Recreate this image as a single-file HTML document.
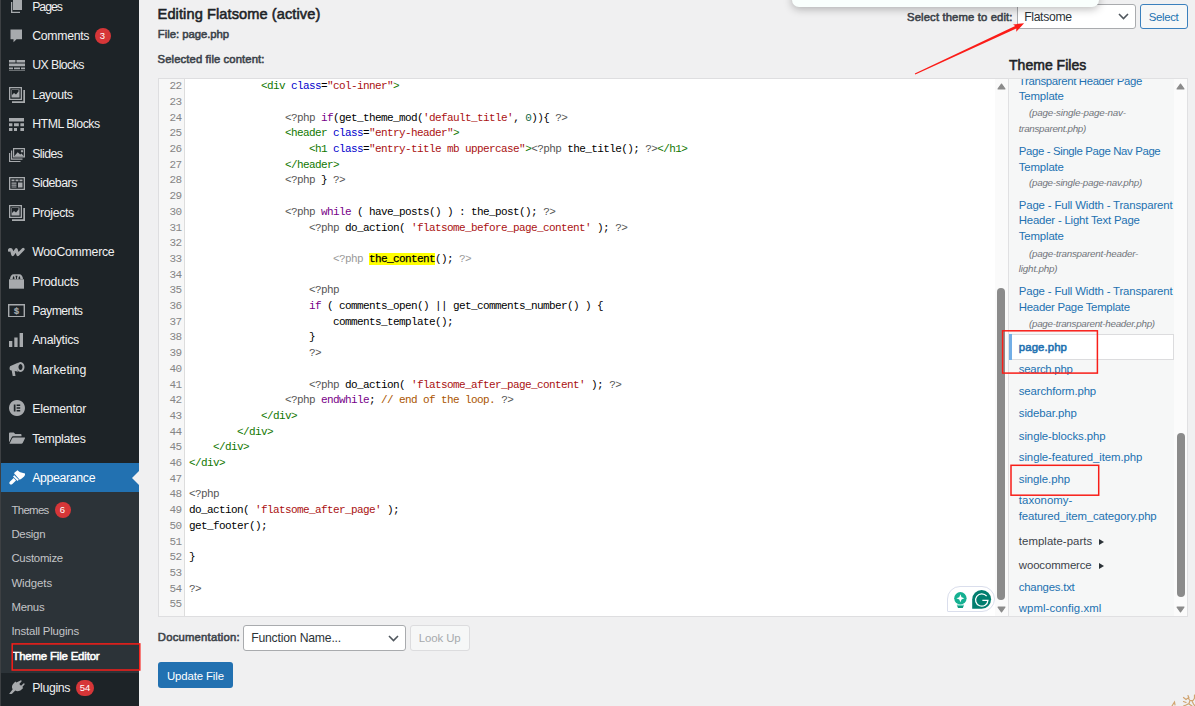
<!DOCTYPE html>
<html lang="en"><head><meta charset="utf-8"><title>Edit Themes</title>
<style>
*{box-sizing:border-box}
html,body{margin:0;padding:0}
body{width:1195px;height:706px;overflow:hidden;background:#f0f0f1;position:relative;font-family:"Liberation Sans",sans-serif;color:#3c434a}
.abs,.ic,.ln,.cl,.tx{position:absolute;white-space:nowrap}
.tx{line-height:20px;height:20px}
#side{position:absolute;left:0;top:0;width:139px;height:706px;background:#1d2327}
#edge{position:absolute;left:0;top:0;width:1px;height:706px;background:#3d4043}
#cur{position:absolute;left:1px;top:463px;width:138px;height:29px;background:#2271b1}
#curarrow{position:absolute;left:132px;top:471px;width:0;height:0;border:7px solid transparent;border-right-color:#f0f0f1;border-left-width:0}
#sub{position:absolute;left:1px;top:492px;width:138px;height:181px;background:#2c3338}
.mi{font-size:12.3px;line-height:20px;color:#f0f0f1;letter-spacing:0}
.si{left:11.5px;font-size:11.4px;line-height:20px;color:#c3c4c7}
.badge{position:absolute;background:#d63638;color:#fff;border-radius:8px;height:16px;min-width:16px;font-size:9.5px;line-height:16px;text-align:center;font-weight:400}
h2{position:absolute;margin:0;left:158px;top:4px;font-size:14.6px;line-height:20px;font-weight:700;color:#1d2327;white-space:nowrap}
.lbl{font-size:11.3px;line-height:20px;font-weight:700;color:#3c434a}
#ed{position:absolute;left:158px;top:78px;width:850px;height:539px;background:#fff;border:1px solid #dedee0;border-right:0}
#gut{position:absolute;left:159px;top:79px;width:26px;height:537px;background:#f7f7f7;border-right:1px solid #ddd}
.ln{left:159px;width:22.5px;text-align:right;font-family:"Liberation Mono",monospace;font-size:11px;letter-spacing:-.6px;line-height:15.7px;height:15.7px;color:#858585}
.cl{left:189px;margin:0;white-space:pre;font-family:"Liberation Mono",monospace;font-size:11px;letter-spacing:-.6px;line-height:15.7px;height:15.7px;color:#000}
.t{color:#117700}.a{color:#0000cc}.s{color:#aa1111}.k{color:#770088}.m{color:#555}.c{color:#aa5500}.n{color:#116644}
.h{background:#ffff00;-webkit-text-stroke:.25px #000}
.f{color:#999}
#sb1{position:absolute;left:995px;top:79px;width:13px;height:537px;background:#fafafa}
#fbox{position:absolute;left:1008px;top:78px;width:180px;height:539px;background:#f6f7f7;border:1px solid #e0e0e2}
#sb2{position:absolute;left:1174px;top:79px;width:13px;height:537px;background:#fbfbfb}
.thumb{position:absolute;width:7.6px;border-radius:4px;background:#8b8b8b}
.fl{font-size:11.4px;line-height:20px;color:#2271b1}
.fb{font-weight:700}
.fi{font-size:9.8px;line-height:20px;font-style:italic;color:#50575e}
.ff{font-size:11.4px;line-height:20px;color:#3c434a}
.tri{display:inline-block;width:0;height:0;border:3.5px solid transparent;border-right-width:0;border-left:5.5px solid #2c3338;margin-left:7px;vertical-align:0}
#cursel{position:absolute;left:1009px;top:334px;width:165px;height:26px;background:#fff;border:1px solid #dcdcde;border-left:0}
#curbar{position:absolute;left:1008.7px;top:334px;width:3.3px;height:26px;background:#72aee6}
.sel{position:absolute;background:#fff;border:1px solid #a9abae;border-radius:3px;font-size:12.2px;color:#2c3338;white-space:nowrap}
.btn{position:absolute;border-radius:3px;font-size:11.4px;text-align:center;white-space:nowrap}
.red{position:absolute;border:1.5px solid #f5222d}
</style></head><body>

<div id="side"></div><div id="edge"></div>
<div id="cur"></div><div id="curarrow"></div><div id="sub"></div>
<svg class="ic" style="left:9.5px;top:-2px" width="13" height="15" viewBox="0 0 13 15" fill="#a7aaad"><path d="M3 1h9v11H3z M1 4h1.3v9.7H10V15H1z" /></svg>
<div class="tx" style="left:32.2px;top:-3px;font-size:12.3px;color:#f0f0f1;letter-spacing:-1.044px;">Pages</div>
<svg class="ic" style="left:10px;top:28.5px" width="13" height="14" viewBox="0 0 13 14" fill="#a7aaad"><path d="M.5 .4h11.5v9.8H6.5L3.5 13.2V10.2H.5z"/></svg>
<div class="tx" style="left:32.2px;top:26px;font-size:12.3px;color:#f0f0f1;letter-spacing:-0.308px;">Comments</div>
<svg class="ic" style="left:8.5px;top:59px" width="16" height="12" viewBox="0 0 16 12" fill="#a7aaad"><path d="M0 1h6.5v2.4H0z M7.5 1H16v2.4H7.5z M0 4.6h16v2.6H0z M0 8.4h4v1.8H0z M5 8.4h6v1.8H5z M12 8.4h4v1.8h-4z"/><path d="M0 11.2h16v.8H0z" opacity=".7"/></svg>
<div class="tx" style="left:32.2px;top:55px;font-size:12.3px;color:#f0f0f1;letter-spacing:-0.565px;">UX Blocks</div>
<svg class="ic" style="left:8.5px;top:87px" width="16" height="16" viewBox="0 0 16 16" fill="#a7aaad"><path d="M0 0h13v13H0z M1.3 1.3v10.4h10.4V1.3z" fill-rule="evenodd"/><path d="M2.5 2.5h8v8h-8z M3 3v5l2-2 2 1.5 2.5-3V3z" fill-rule="evenodd"/><path d="M14.3 3H16v13H3v-1.7h11.3z"/></svg>
<div class="tx" style="left:32.2px;top:85px;font-size:12.3px;color:#f0f0f1;letter-spacing:-0.38px;">Layouts</div>
<svg class="ic" style="left:9px;top:117.8px" width="15" height="13.4" viewBox="0 0 15 13.4" fill="#a7aaad"><path d="M0 0h15v3.5H0z M0 5.2h3.4v3H0z M5 5.2h4.8v3H5z M11.4 5.2H15v3h-3.6z M0 10h3.4v3.4H0z M5 10h3v3.4H5z M11.4 10H15v3.4h-3.6z"/></svg>
<div class="tx" style="left:32.2px;top:114px;font-size:12.3px;color:#f0f0f1;letter-spacing:-0.466px;">HTML Blocks</div>
<svg class="ic" style="left:8.5px;top:147.5px" width="16" height="14.2" viewBox="0 0 16 14.2" fill="#a7aaad"><path d="M4 0h12v9.5H4z M5.2 1.2v7.1h9.6V1.2z" fill-rule="evenodd"/><path d="M5.2 8.3l3.5-4 2.5 2.2 1.3-1 2.3 2.8z M13 2a1.2 1.2 0 1 0 .01 0z"/><path d="M2 2.5h1.2v8h10.3v1.2H2z M0 5h1.2v8h10.3v1.2H0z"/></svg>
<div class="tx" style="left:32.2px;top:144px;font-size:12.3px;color:#f0f0f1;letter-spacing:-0.56px;">Slides</div>
<svg class="ic" style="left:9px;top:176.5px" width="16" height="13" viewBox="0 0 16 13" fill="#a7aaad"><path d="M0 0h16v13H0z M1.3 1.3v10.4h13.4V1.3z" fill-rule="evenodd"/><path d="M2.5 2.6h3v1.6h-3z M6.5 2.6h3v1.6h-3z M10.5 2.6h3v1.6h-3z M2.5 5.4h5v1.4h-5z M2.5 7.6h5v1.2h-5z M2.5 9.6h5v1h-5z M9 5.6h4.5v5H9z"/></svg>
<div class="tx" style="left:32.2px;top:173px;font-size:12.3px;color:#f0f0f1;letter-spacing:-0.492px;">Sidebars</div>
<svg class="ic" style="left:8.5px;top:204.5px" width="16" height="16" viewBox="0 0 16 16" fill="#a7aaad"><path d="M0 0h13v13H0z M1.3 1.3v10.4h10.4V1.3z" fill-rule="evenodd"/><path d="M2.5 2.5h8v8h-8z M3 3v5l2-2 2 1.5 2.5-3V3z" fill-rule="evenodd"/><path d="M14.3 3H16v13H3v-1.7h11.3z"/></svg>
<div class="tx" style="left:32.2px;top:203px;font-size:12.3px;color:#f0f0f1;letter-spacing:-0.346px;">Projects</div>
<svg class="ic" style="left:8px;top:245px" width="17" height="12.5" viewBox="0 0 17 12.5" fill="#a7aaad"><path d="M1.2 5.3C1.7 4.1 3.2 4.1 3.5 5.3L4.7 9.7 8.3 4.6 9.8 9.7 15.2 4.3" fill="none" stroke="#a7aaad" stroke-width="2.9" stroke-linejoin="round" stroke-linecap="round"/></svg>
<div class="tx" style="left:32.2px;top:242px;font-size:12.3px;color:#f0f0f1;letter-spacing:-0.27px;">WooCommerce</div>
<svg class="ic" style="left:9px;top:274.3px" width="15" height="14.5" viewBox="0 0 15 14.5" fill="#a7aaad"><path d="M0 5.3h15V14.7H0z"/><path d="M1 5.3C1 2.3 2.6.300 4.8.300h5.4c2.2 0 3.8 2 3.8 5h-2.7c0-1.7-.4-2.9-1.1-3.3-.5.8-.7 1.9-.7 3.3H7.9c0-1.5.2-2.7.7-3.6H6.4c.5.9.7 2.1.7 3.6H5.5c0-1.4-.2-2.5-.7-3.3-.7.4-1.1 1.6-1.1 3.3z"/></svg>
<div class="tx" style="left:32.2px;top:272px;font-size:12.3px;color:#f0f0f1;letter-spacing:-0.247px;">Products</div>
<svg class="ic" style="left:8px;top:304px" width="17" height="13.4" viewBox="0 0 17 13.4" fill="#a7aaad"><path d="M0 0h17v13.4H0z M1.4 1.4v10.6h14.2V1.4z" fill-rule="evenodd"/><text x="8.5" y="10" font-size="9" font-weight="700" stroke="#a7aaad" stroke-width=".2" text-anchor="middle" font-family="Liberation Sans, sans-serif">$</text></svg>
<div class="tx" style="left:32.2px;top:301px;font-size:12.3px;color:#f0f0f1;letter-spacing:-0.57px;">Payments</div>
<svg class="ic" style="left:9px;top:332.5px" width="14" height="14.5" viewBox="0 0 14 14.5" fill="#a7aaad"><path d="M0 8h3.3v6.5H0z M5.3 4.5h3.3v10H5.3z M10.6 0h3.4v14.5h-3.4z"/></svg>
<div class="tx" style="left:32.2px;top:330px;font-size:12.3px;color:#f0f0f1;letter-spacing:-0.277px;">Analytics</div>
<svg class="ic" style="left:9px;top:362px" width="15.5" height="14" viewBox="0 0 15.5 14" fill="#a7aaad"><path d="M11.5 0a4 5 0 1 1-.01 0z M11.5 2a2 3 0 1 0 .01 0z" fill-rule="evenodd"/><path d="M9.5.400L1.5 4C.300 4.6.300 8 1.5 8.3l1.2.2 1 5.5h2.8L5.7 9l3.8.8C7.6 7.8 7.6 2.8 9.5.400z"/></svg>
<div class="tx" style="left:32.2px;top:360px;font-size:12.3px;color:#f0f0f1;letter-spacing:0.012px;">Marketing</div>
<svg class="ic" style="left:8.5px;top:400px" width="16" height="16" viewBox="0 0 16 16" fill="#a7aaad"><path d="M8 0a8 8 0 1 1-.01 0z M4.8 4.6v6.8h1.7V4.6z M7.6 4.6v1.5h3.6V4.6z M7.6 7.25v1.5h3.6v-1.5z M7.6 9.9v1.5h3.6V9.9z" fill-rule="evenodd"/></svg>
<div class="tx" style="left:32.2px;top:399px;font-size:12.3px;color:#f0f0f1;letter-spacing:-0.243px;">Elementor</div>
<svg class="ic" style="left:9px;top:431.5px" width="16" height="12" viewBox="0 0 16 12" fill="#a7aaad"><path d="M0 1.5C0 .800.6.500 1.2.500h3.5l1.5 1.5h5.3c.6 0 1 .4 1 1v1.3H4.2c-.8 0-1.3.4-1.6 1.1L0 10.5z"/><path d="M4.5 5.5h11c.5 0 .7.4.5.8l-2.3 4.7c-.3.6-.8.8-1.4.8H.500l2.7-5.5c.3-.500.7-.800 1.3-.800z"/></svg>
<div class="tx" style="left:32.2px;top:429px;font-size:12.3px;color:#f0f0f1;letter-spacing:-0.306px;">Templates</div>
<svg class="ic" style="left:8.5px;top:470px" width="16.5" height="14.5" viewBox="0 0 16.5 14.5" fill="#fff"><g transform="translate(-8.5,-470)"><path d="M9.3 484.1c-.7-.7-.6-1.7.2-2.5l3.7-3.5 2.3 2.3-3.6 3.6c-.8.8-1.9.800-2.6.100z"/><path d="M12.5 476.5l1.3-1.2 4.5 4.5-1.3 1.2z"/><path d="M14.6 474.6c-1-.6-1.2-1.5-.5-2.1l2.9-2.3c1.2 1.3 2.4 2 3.8 2.4 1.3.4 2.7.7 4.3.9-.5 1.6-1.4 3-2.6 4.1-1 .9-2.1 1.7-3.3 2.1z"/></g></svg>
<div class="tx" style="left:32.2px;top:468px;font-size:12.3px;color:#fff;letter-spacing:-0.336px;">Appearance</div>
<svg class="ic" style="left:9px;top:680px" width="16" height="14" viewBox="0 0 16 14" fill="#a7aaad"><path d="M11.5.500c.6-.5 1.5.300 1 1L10.3 4l1.7 1.7 2.5-2.2c.7-.5 1.5.4 1 1l-2.2 2.5.9.9-1.4 1.4C10.5 11.6 8 11.7 6.3 10.5L3.5 13.3c-1.2 1.2-2.7 1-3.3.5l3.5-4.6C2.5 7.4 2.7 5.3 5 3L6.4 1.6l.9.9z"/></svg>
<div class="tx" style="left:32.2px;top:678px;font-size:12.3px;color:#f0f0f1;letter-spacing:-0.341px;">Plugins</div>
<div class="badge" style="left:94.5px;top:28px">3</div>
<div class="badge" style="left:54.5px;top:501.5px">6</div>
<div class="badge" style="left:76px;top:680.2px;min-width:18px;height:16px;line-height:16px">54</div>
<div class="tx" style="left:11.4px;top:500px;font-size:11.4px;color:#c3c4c7;letter-spacing:-0.651px;">Themes</div>
<div class="tx" style="left:11.4px;top:524px;font-size:11.4px;color:#c3c4c7;letter-spacing:-0.274px;">Design</div>
<div class="tx" style="left:11.4px;top:548px;font-size:11.4px;color:#c3c4c7;letter-spacing:-0.252px;">Customize</div>
<div class="tx" style="left:11.4px;top:573px;font-size:11.4px;color:#c3c4c7;letter-spacing:-0.076px;">Widgets</div>
<div class="tx" style="left:11.4px;top:597px;font-size:11.4px;color:#c3c4c7;letter-spacing:-0.251px;">Menus</div>
<div class="tx" style="left:11.4px;top:621px;font-size:11.4px;color:#c3c4c7;letter-spacing:-0.184px;">Install Plugins</div>
<div class="tx" style="left:12.4px;top:646px;font-size:11.4px;color:#fff;letter-spacing:-0.168px;-webkit-text-stroke:.55px #fff;">Theme File Editor</div>


<div class="tx" style="left:157.6px;top:4px;font-size:14.6px;color:#1d2327;letter-spacing:0.088px;-webkit-text-stroke:.55px #1d2327;">Editing Flatsome (active)</div>
<div class="tx" style="left:157.8px;top:24px;font-size:11.3px;color:#3c434a;letter-spacing:-0.024px;-webkit-text-stroke:.55px #3c434a;">File: page.php</div>
<div class="tx" style="left:157.6px;top:49px;font-size:11.3px;color:#3c434a;letter-spacing:0.096px;-webkit-text-stroke:.55px #3c434a;">Selected file content:</div>

<div id="ed"></div><div id="gut"></div>
<div class="ln" style="top:79.2px">22</div><pre class="cl" style="top:79.2px">            <span class="t">&lt;div</span> <span class="a">class</span>=<span class="s">"col-inner"</span><span class="t">&gt;</span></pre>
<div class="ln" style="top:94.9px">23</div><pre class="cl" style="top:94.9px"></pre>
<div class="ln" style="top:110.6px">24</div><pre class="cl" style="top:110.6px">                <span class="m">&lt;?php</span> <span class="k">if</span>(get_theme_mod(<span class="s">'default_title'</span>, <span class="n">0</span>)){ <span class="m">?&gt;</span></pre>
<div class="ln" style="top:126.3px">25</div><pre class="cl" style="top:126.3px">                <span class="t">&lt;header</span> <span class="a">class</span>=<span class="s">"entry-header"</span><span class="t">&gt;</span></pre>
<div class="ln" style="top:142px">26</div><pre class="cl" style="top:142px">                    <span class="t">&lt;h1</span> <span class="a">class</span>=<span class="s">"entry-title mb uppercase"</span><span class="t">&gt;</span><span class="m">&lt;?php</span> the_title(); <span class="m">?&gt;</span><span class="t">&lt;/h1&gt;</span></pre>
<div class="ln" style="top:157.7px">27</div><pre class="cl" style="top:157.7px">                <span class="t">&lt;/header&gt;</span></pre>
<div class="ln" style="top:173.4px">28</div><pre class="cl" style="top:173.4px">                <span class="m">&lt;?php</span> } <span class="m">?&gt;</span></pre>
<div class="ln" style="top:189.1px">29</div><pre class="cl" style="top:189.1px"></pre>
<div class="ln" style="top:204.8px">30</div><pre class="cl" style="top:204.8px">                <span class="m">&lt;?php</span> <span class="k">while</span> ( have_posts() ) : the_post(); <span class="m">?&gt;</span></pre>
<div class="ln" style="top:220.5px">31</div><pre class="cl" style="top:220.5px">                    <span class="m">&lt;?php</span> do_action( <span class="s">'flatsome_before_page_content'</span> ); <span class="m">?&gt;</span></pre>
<div class="ln" style="top:236.2px">32</div><pre class="cl" style="top:236.2px"></pre>
<div class="ln" style="top:251.9px">33</div><pre class="cl" style="top:251.9px">                        <span class="m f">&lt;?php</span> <span class="h">the_content</span>(); <span class="m f">?&gt;</span></pre>
<div class="ln" style="top:267.6px">34</div><pre class="cl" style="top:267.6px"></pre>
<div class="ln" style="top:283.3px">35</div><pre class="cl" style="top:283.3px">                    <span class="m">&lt;?php</span></pre>
<div class="ln" style="top:299px">36</div><pre class="cl" style="top:299px">                    <span class="k">if</span> ( comments_open() || get_comments_number() ) {</pre>
<div class="ln" style="top:314.7px">37</div><pre class="cl" style="top:314.7px">                        comments_template();</pre>
<div class="ln" style="top:330.4px">38</div><pre class="cl" style="top:330.4px">                    }</pre>
<div class="ln" style="top:346.1px">39</div><pre class="cl" style="top:346.1px">                    <span class="m">?&gt;</span></pre>
<div class="ln" style="top:361.8px">40</div><pre class="cl" style="top:361.8px"></pre>
<div class="ln" style="top:377.5px">41</div><pre class="cl" style="top:377.5px">                    <span class="m">&lt;?php</span> do_action( <span class="s">'flatsome_after_page_content'</span> ); <span class="m">?&gt;</span></pre>
<div class="ln" style="top:393.2px">42</div><pre class="cl" style="top:393.2px">                <span class="m">&lt;?php</span> <span class="k">endwhile</span>; <span class="c">// end of the loop. </span><span class="m">?&gt;</span></pre>
<div class="ln" style="top:408.9px">43</div><pre class="cl" style="top:408.9px">            <span class="t">&lt;/div&gt;</span></pre>
<div class="ln" style="top:424.6px">44</div><pre class="cl" style="top:424.6px">        <span class="t">&lt;/div&gt;</span></pre>
<div class="ln" style="top:440.3px">45</div><pre class="cl" style="top:440.3px">    <span class="t">&lt;/div&gt;</span></pre>
<div class="ln" style="top:456px">46</div><pre class="cl" style="top:456px"><span class="t">&lt;/div&gt;</span></pre>
<div class="ln" style="top:471.7px">47</div><pre class="cl" style="top:471.7px"></pre>
<div class="ln" style="top:487.4px">48</div><pre class="cl" style="top:487.4px"><span class="m">&lt;?php</span></pre>
<div class="ln" style="top:503.1px">49</div><pre class="cl" style="top:503.1px">do_action( <span class="s">'flatsome_after_page'</span> );</pre>
<div class="ln" style="top:518.8px">50</div><pre class="cl" style="top:518.8px">get_footer();</pre>
<div class="ln" style="top:534.5px">51</div><pre class="cl" style="top:534.5px"></pre>
<div class="ln" style="top:550.2px">52</div><pre class="cl" style="top:550.2px">}</pre>
<div class="ln" style="top:565.9px">53</div><pre class="cl" style="top:565.9px"></pre>
<div class="ln" style="top:581.6px">54</div><pre class="cl" style="top:581.6px"><span class="m">?&gt;</span></pre>
<div class="ln" style="top:597.3px">55</div><pre class="cl" style="top:597.3px"></pre>
<div id="sb1"></div>
<svg class="abs" style="left:996.6px;top:82.5px" width="9" height="7" viewBox="0 0 9 7"><path d="M4.5 1.1L7.9 5.9H1.1z" fill="#8b8b8b" stroke="#8b8b8b" stroke-width="1.2" stroke-linejoin="round"/></svg>
<svg class="abs" style="left:996.6px;top:605.6px" width="9" height="7" viewBox="0 0 9 7"><path d="M4.5 5.9L7.9 1.1H1.1z" fill="#8b8b8b" stroke="#8b8b8b" stroke-width="1.2" stroke-linejoin="round"/></svg>
<div class="thumb" style="left:997.3px;top:288px;height:312px"></div>

<div id="fbox"></div><div id="cursel"></div><div id="curbar"></div>
<div class="abs" style="left:1009px;top:79px;width:165px;height:536px;overflow:hidden"><div class="abs" style="left:-1009px;top:-79px;width:1195px;height:706px">
<div class="tx" style="left:1018.8px;top:71px;font-size:11.4px;color:#2271b1;letter-spacing:-0.349px;">Transparent Header Page</div>
<div class="tx" style="left:1018.8px;top:86px;font-size:11.4px;color:#2271b1;letter-spacing:-0.16px;">Template</div>
<div class="tx" style="left:1029px;top:103px;font-size:9.8px;color:#70747a;letter-spacing:-0.205px;font-style:italic;">(page-single-page-nav-</div>
<div class="tx" style="left:1018.8px;top:119px;font-size:9.8px;color:#70747a;letter-spacing:-0.293px;font-style:italic;">transparent.php)</div>
<div class="tx" style="left:1018.8px;top:141px;font-size:11.4px;color:#2271b1;letter-spacing:-0.363px;">Page - Single Page Nav Page</div>
<div class="tx" style="left:1018.8px;top:157px;font-size:11.4px;color:#2271b1;letter-spacing:-0.16px;">Template</div>
<div class="tx" style="left:1029px;top:173px;font-size:9.8px;color:#70747a;letter-spacing:-0.258px;font-style:italic;">(page-single-page-nav.php)</div>
<div class="tx" style="left:1018.8px;top:195px;font-size:11.4px;color:#2271b1;letter-spacing:-0.149px;">Page - Full Width - Transparent</div>
<div class="tx" style="left:1018.8px;top:210px;font-size:11.4px;color:#2271b1;letter-spacing:-0.204px;">Header - Light Text Page</div>
<div class="tx" style="left:1018.8px;top:226px;font-size:11.4px;color:#2271b1;letter-spacing:-0.16px;">Template</div>
<div class="tx" style="left:1029px;top:244px;font-size:9.8px;color:#70747a;letter-spacing:-0.226px;font-style:italic;">(page-transparent-header-</div>
<div class="tx" style="left:1018.8px;top:259px;font-size:9.8px;color:#70747a;letter-spacing:-0.168px;font-style:italic;">light.php)</div>
<div class="tx" style="left:1018.8px;top:281px;font-size:11.4px;color:#2271b1;letter-spacing:-0.149px;">Page - Full Width - Transparent</div>
<div class="tx" style="left:1018.8px;top:297px;font-size:11.4px;color:#2271b1;letter-spacing:-0.269px;">Header Page Template</div>
<div class="tx" style="left:1029px;top:314px;font-size:9.8px;color:#70747a;letter-spacing:-0.269px;font-style:italic;">(page-transparent-header.php)</div>
<div class="tx" style="left:1018.8px;top:337px;font-size:11.4px;color:#2271b1;letter-spacing:0.083px;-webkit-text-stroke:.55px #2271b1;">page.php</div>
<div class="tx" style="left:1018.8px;top:359px;font-size:11.4px;color:#2271b1;letter-spacing:-0.262px;">search.php</div>
<div class="tx" style="left:1018.8px;top:381px;font-size:11.4px;color:#2271b1;letter-spacing:-0.134px;">searchform.php</div>
<div class="tx" style="left:1018.8px;top:403px;font-size:11.4px;color:#2271b1;letter-spacing:-0.091px;">sidebar.php</div>
<div class="tx" style="left:1018.8px;top:426px;font-size:11.4px;color:#2271b1;letter-spacing:-0.076px;">single-blocks.php</div>
<div class="tx" style="left:1018.8px;top:447px;font-size:11.4px;color:#2271b1;letter-spacing:-0.077px;">single-featured_item.php</div>
<div class="tx" style="left:1018.8px;top:469px;font-size:11.4px;color:#2271b1;letter-spacing:-0.082px;">single.php</div>
<div class="tx" style="left:1018.8px;top:490px;font-size:11.4px;color:#2271b1;letter-spacing:0.052px;">taxonomy-</div>
<div class="tx" style="left:1018.8px;top:506px;font-size:11.4px;color:#2271b1;letter-spacing:-0.124px;">featured_item_category.php</div>
<div class="tx" style="left:1018.8px;top:531px;font-size:11.4px;color:#3c434a;letter-spacing:0.045px;">template-parts<span class="tri"></span></div>
<div class="tx" style="left:1018.8px;top:555px;font-size:11.4px;color:#3c434a;letter-spacing:-0.116px;">woocommerce<span class="tri"></span></div>
<div class="tx" style="left:1018.8px;top:577px;font-size:11.4px;color:#2271b1;letter-spacing:-0.227px;">changes.txt</div>
<div class="tx" style="left:1018.8px;top:598px;font-size:11.4px;color:#2271b1;letter-spacing:0.06px;">wpml-config.xml</div>
</div></div>
<div id="sb2"></div>
<svg class="abs" style="left:1176.4px;top:82.5px" width="9" height="7" viewBox="0 0 9 7"><path d="M4.5 1.1L7.9 5.9H1.1z" fill="#8b8b8b" stroke="#8b8b8b" stroke-width="1.2" stroke-linejoin="round"/></svg>
<svg class="abs" style="left:1176.4px;top:605.6px" width="9" height="7" viewBox="0 0 9 7"><path d="M4.5 5.9L7.9 1.1H1.1z" fill="#8b8b8b" stroke="#8b8b8b" stroke-width="1.2" stroke-linejoin="round"/></svg>
<div class="thumb" style="left:1177.3px;top:433px;height:164px"></div>

<div class="tx" style="left:1009px;top:55px;font-size:14px;color:#1d2327;letter-spacing:0.027px;-webkit-text-stroke:.55px #1d2327;">Theme Files</div>

<div class="tx" style="left:907px;top:7px;font-size:11.3px;color:#3c434a;letter-spacing:0.125px;-webkit-text-stroke:.55px #3c434a;">Select theme to edit:</div>
<div class="sel" style="left:1016.5px;top:3.5px;width:119px;height:25.5px;"></div><div class="tx" style="left:1024.2px;top:7px;font-size:12.2px;color:#2c3338;letter-spacing:-0.332px;">Flatsome</div>
<svg class="abs" style="left:1117.5px;top:13.2px" width="11" height="7" viewBox="0 0 11 7" fill="none" stroke="#50575e" stroke-width="1.6"><path d="M1 1l4.5 4.5L10 1"/></svg>
<div class="btn" style="left:1140px;top:3.5px;width:47.6px;height:25.5px;background:#f6f7f7;border:1px solid #3b80bd"></div><div class="tx" style="left:1148.8px;top:7px;font-size:11.4px;color:#2271b1;letter-spacing:-0.354px;">Select</div>

<div class="tx" style="left:157.8px;top:627px;font-size:11.3px;color:#3c434a;letter-spacing:0.206px;-webkit-text-stroke:.55px #3c434a;">Documentation:</div>
<div class="sel" style="left:243.3px;top:625px;width:162.3px;height:26px;"></div><div class="tx" style="left:251.2px;top:628px;font-size:12.2px;color:#2c3338;letter-spacing:-0.188px;">Function Name...</div>
<svg class="abs" style="left:388px;top:635.3px" width="11" height="7" viewBox="0 0 11 7" fill="none" stroke="#50575e" stroke-width="1.6"><path d="M1 1l4.5 4.5L10 1"/></svg>
<div class="btn" style="left:410.3px;top:625px;width:59.7px;height:26px;background:#f6f7f7;border:1px solid #dcdcde"></div><div class="tx" style="left:418.8px;top:628px;font-size:11.4px;color:#a7aaad;letter-spacing:-0.09px;">Look Up</div>
<div class="btn" style="left:158px;top:662px;width:75px;height:26px;background:#2271b1"></div><div class="tx" style="left:167px;top:666px;font-size:11.4px;color:#fff;letter-spacing:-0.125px;">Update File</div>

<!-- annotations -->
<svg class="abs" style="left:0;top:0" width="1195" height="706" viewBox="0 0 1195 706" fill="none" stroke="#f81e18" stroke-width="1.5"><rect x="12.2" y="643.9" width="127.6" height="26.1"/><rect x="1002.6" y="330.8" width="94.8" height="42.3"/><rect x="1011" y="465.3" width="87.7" height="29.9"/></svg>
<svg class="abs" style="left:900px;top:10px" width="140" height="75" viewBox="900 10 140 75"><path d="M914.8 73.6L1015.15 26 1013.1 24.4 1024.1 23.3 1016.3 31.8 1016.25 28.4 915.3 74.5z" fill="#fb1c18"/></svg>

<!-- popup at top -->
<div class="abs" style="left:792px;top:-10px;width:306.5px;height:17.3px;background:#f9fffd;border-radius:7px;box-shadow:0 2px 9px rgba(0,0,0,.28)"></div>

<!-- grammarly -->
<div class="abs" style="left:947px;top:586px;width:48px;height:26px;background:#fff;border:1px solid #dadeec;border-radius:13px 13px 13px 1px"></div>
<svg class="abs" style="left:947px;top:586px" width="48" height="26" viewBox="947 586 48 26">
<circle cx="960.4" cy="598.3" r="6.2" fill="#14b091"/><path d="M956.9 604.6h7v1.4h-7z" fill="#5fcdb8"/><path d="M957.2 606h6.4l-.8 1.9h-4.8z" fill="#0d9c80"/><path d="M960.4 594.3l1.15 2.85 2.85 1.15-2.85 1.15-1.15 2.85-1.15-2.85-2.85-1.15 2.85-1.15z" fill="#fff"/>
<path d="M981.65 589.9a9.45 9.45 0 0 1 0 18.9h-9.45v-9.45a9.45 9.45 0 0 1 9.45-9.45z" fill="#027e6f"/><path d="M986.7 596.2A6.2 6.2 0 1 0 987.95 600.4h-5.6" fill="none" stroke="#fff" stroke-width="1.25"/>
</svg>

<!-- corner decoration -->
<svg class="abs" style="left:1166px;top:690px" width="29" height="16" viewBox="1166 690 29 16" fill="none" stroke="#c68b45" stroke-width="1.2" stroke-linecap="round" opacity=".75"><path d="M1183.5 697.5l2.5 2 2-1.5 2 2.5 3 0 2-3M1188 695.5l1 2.5M1194.5 695v3M1190 700.5l-1 3-3 1.5-2.5 1M1186 702.5l-2.5-1M1192 701l1.5 3 1.5 2M1189 704l3 2M1172 706l1.5-2.5 1-1.5.5 3"/></svg>

</body></html>
